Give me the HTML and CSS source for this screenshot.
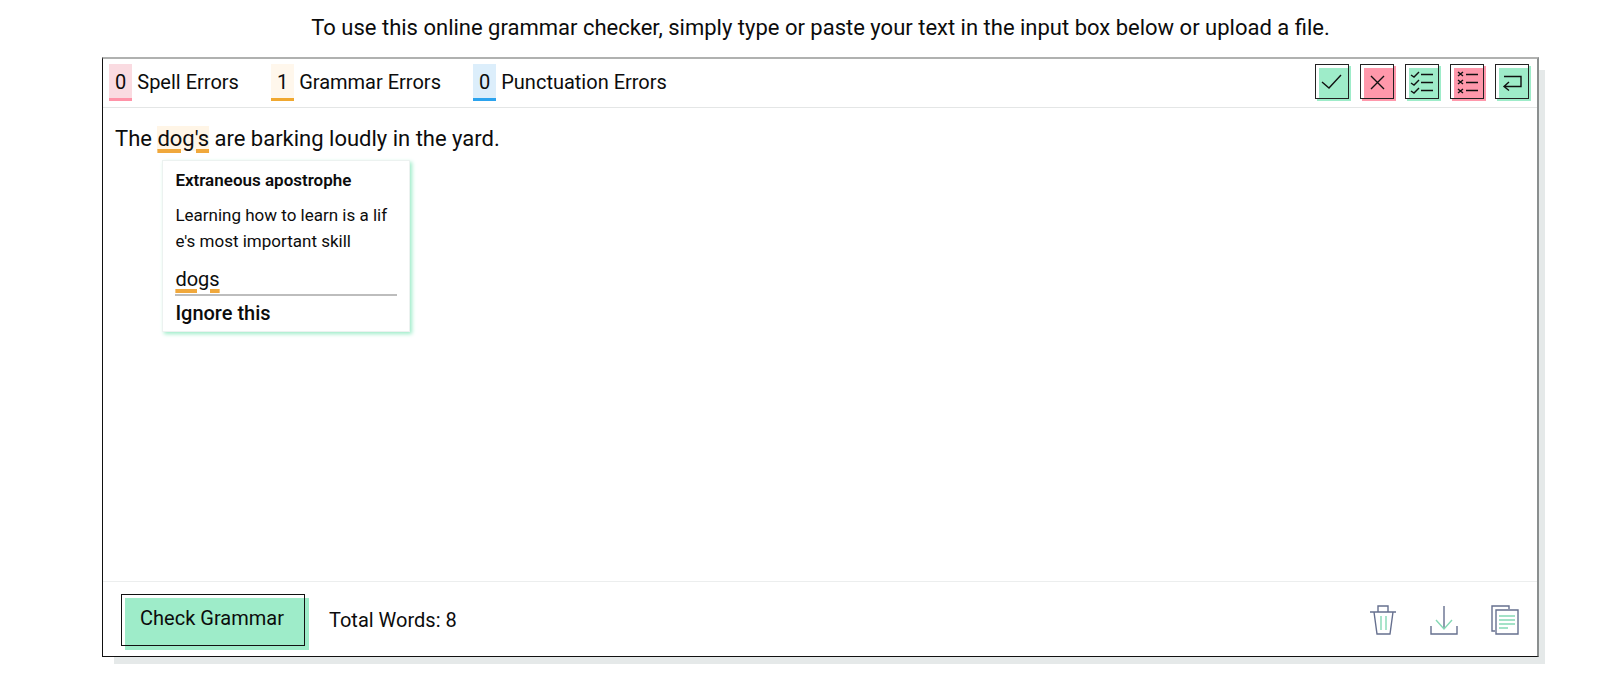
FILE: index.html
```html
<!DOCTYPE html>
<html lang="en">

<head>
    <meta charset="utf-8">
    <title>Grammar Checker</title>
    <link rel="stylesheet" href="styles.css">
</head>

<body>
    <main class="checker">
        <p class="intro">To use this online grammar checker, simply type or paste your text in the input box below or upload a file.</p>
        <div class="box">
            <div class="toolbar">
                <ul class="counts">
                    <li><span class="count spell">0</span> Spell Errors</li>
                    <li><span class="count grammar">1</span> Grammar Errors</li>
                    <li><span class="count punctuation">0</span> Punctuation Errors</li>
                </ul>
                <div class="actions">
                    <button class="action accept" type="button" aria-label="Accept">
                        <svg viewBox="0 0 32 32"><path d="M6 16l7 6L25 9" /></svg>
                    </button>
                    <button class="action reject" type="button" aria-label="Reject">
                        <svg viewBox="0 0 32 32"><path d="M10 10l13 13M23 10L10 23" /></svg>
                    </button>
                    <button class="action accept" type="button" aria-label="Accept all">
                        <svg viewBox="0 0 32 32"><path d="M5 9l3 2 5-5M5 17l3 2 5-5M5 25l3 2 5-5M15 8.5h12M15 16.5h12M15 24.5h12" /></svg>
                    </button>
                    <button class="action reject" type="button" aria-label="Reject all">
                        <svg viewBox="0 0 32 32"><path d="M7 6l5 4M12 6l-5 4M7 14l5 4M12 14l-5 4M7 23l5 4M12 23l-5 4M15 8.5h12M15 16.5h12M15 24.5h12" /></svg>
                    </button>
                    <button class="action accept" type="button" aria-label="Undo">
                        <svg viewBox="0 0 32 32"><path d="M8 10.500h17v10H8M13 16l-5 4.500 5 4" /></svg>
                    </button>
                </div>
            </div>
            <div class="editor" contenteditable="true" spellcheck="false" role="textbox" aria-multiline="true" aria-label="Your text">The <span class="issue"><span class="word">dog's</span><span class="popup" contenteditable="false">
                <strong class="popup-title">Extraneous apostrophe</strong>
                <span class="popup-text">Learning how to learn is a life's most important skill</span>
                <button class="suggestion" type="button">dogs</button>
                <button class="ignore" type="button">Ignore this</button>
            </span></span> are barking loudly in the yard.</div>
            <div class="footer">
                <button class="check" type="button">Check Grammar</button>
                <span class="total">Total Words: 8</span>
                <div class="tools">
                    <button class="tool" type="button" aria-label="Delete">
                        <svg viewBox="0 0 28 30"><path d="M1 7h26M9 7V1h10v6M5 7l3 22h13l3-22" /><path class="accent" d="M12 11v14M17 11v14" /></svg>
                    </button>
                    <button class="tool" type="button" aria-label="Download">
                        <svg viewBox="0 0 28 30"><path d="M14 1v23M1 21v8h26v-8" /><path class="accent" d="M6 15l8 9 8-9" /></svg>
                    </button>
                    <button class="tool" type="button" aria-label="Copy">
                        <svg viewBox="0 0 28 30"><path d="M18 4V1H1v25h3M5 5h22v24H5z" /><path class="accent" d="M8 11h16M8 15h16M8 19h16M8 23h9" /></svg>
                    </button>
                </div>
            </div>
        </div>
    </main>
</body>

</html>
```
FILE: styles.css
```css
* {
    box-sizing: border-box;
}

body {
    margin: 0;
    background-color: #fff;
    color: #0c0c0c;
    font-family: Roboto, Arial, sans-serif;
    font-size: 20px;
}

button {
    padding: 0;
    border: none;
    background: none;
    color: inherit;
    font: inherit;
    cursor: pointer;
}

svg {
    display: block;
    fill: none;
}

.checker {
    display: flex;
    flex-direction: column;
    min-height: 100vh;
    padding: 12px 61px 16px 102px;
}

.intro {
    margin: 0 0 13px;
    font-size: 22px;
    line-height: 32px;
    text-align: center;
}

.box {
    display: flex;
    flex: 1;
    flex-direction: column;
    border: 1px solid #111;
    border-top: 2px solid #b0b1b0;
    border-right: 2px solid #8b8f8f;
    box-shadow: 9px 10px 0 -3px #e5e9e9;
}

.toolbar {
    display: flex;
    justify-content: space-between;
    padding: 5px 8px 6px 6px;
    border-bottom: 1px solid #e4e6e6;
}

.counts {
    display: flex;
    gap: 32px;
    margin: 0;
    padding: 0;
    list-style: none;
}

.counts li {
    display: flex;
    gap: 5px;
    line-height: 36px;
}

.count {
    padding: 0 6px;
    height: 37px;
    border-bottom: 3px solid;
}

.spell {
    background-color: #fadbe1;
    border-color: #ff93a8;
}

.grammar {
    background-color: #fff7ec;
    border-color: #f0a830;
}

.punctuation {
    background-color: #dceefb;
    border-color: #2ba3ee;
}

.actions {
    display: flex;
    gap: 11px;
}

.action {
    width: 34px;
    height: 35px;
    border: 1px solid #222;
    background: linear-gradient(#fff, #fff) no-repeat left / 3px 100%, linear-gradient(#fff, #fff) no-repeat top / 100% 3px;
}

.action svg {
    width: 32px;
    height: 32px;
    stroke: #111;
    stroke-width: 1.4;
}

.accept {
    background-color: #9eecc9;
    box-shadow: 2px 2px 0 #9eecc9;
}

.reject {
    background-color: #ff98ab;
    box-shadow: 2px 2px 0 #ff98ab;
}

.editor {
    flex: 1;
    padding: 15px 12px;
    font-size: 22px;
    line-height: 32px;
    outline: none;
}

.issue {
    position: relative;
}

.word {
    background-color: #fff5e6;
}

.word,
.suggestion {
    text-decoration: underline 4px #f0a83c;
    text-underline-offset: 3px;
}

.popup {
    position: absolute;
    top: 34px;
    left: 5px;
    display: flex;
    flex-direction: column;
    align-items: flex-start;
    width: 248px;
    padding: 6px 12px 1px;
    border: 1px solid #ecf2f0;
    background-color: #fff;
    box-shadow: 2px 2px 4px #9eecc9;
    font-size: 17px;
    line-height: 26px;
    word-break: break-all;
}

.popup-title {
    margin-bottom: 9px;
    font-weight: 600;
}

.popup-text {
    padding-right: 6px;
}

.suggestion {
    margin-top: 10px;
    font-size: 20px;
    line-height: 30px;
}

.ignore {
    width: 100%;
    border-top: 2px solid #bdbdbd;
    font-size: 20px;
    font-weight: 500;
    line-height: 34px;
    text-align: left;
}

.footer {
    display: flex;
    align-items: center;
    padding: 12px 18px 10px;
    border-top: 1px solid #eceeee;
}

.check {
    width: 184px;
    height: 52px;
    padding: 0 2px 4px 0;
    border: 1px solid #111;
    background: linear-gradient(#fff, #fff) no-repeat left / 3px 100%, linear-gradient(#fff, #fff) no-repeat top / 100% 3px;
    background-color: #9eecc9;
    box-shadow: 4px 4px 0 #9eecc9;
}

.total {
    margin-left: 24px;
}

.tools {
    display: flex;
    gap: 33px;
    margin-left: auto;
}

.tool svg {
    width: 28px;
    height: 30px;
    stroke: #66708f;
    stroke-width: 1.4;
}

.tool .accent {
    stroke: #85d9b5;
}
```
